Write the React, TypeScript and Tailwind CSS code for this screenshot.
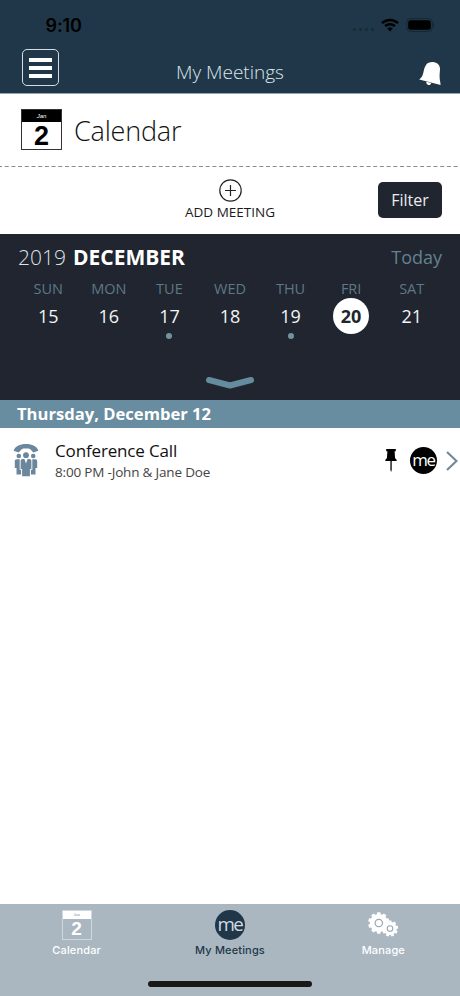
import React from "react";

const sans = "font-['Open_Sans','Noto_Sans',sans-serif]";

function gearPath(cx: number, cy: number, outer: number, inner: number, teeth: number) {
  const pts: string[] = [];
  const step = (Math.PI * 2) / teeth;
  for (let i = 0; i < teeth; i++) {
    const a = i * step - Math.PI / 2;
    const corners: [number, number][] = [
      [-0.34, inner],
      [-0.24, outer],
      [0.24, outer],
      [0.34, inner],
    ];
    corners.forEach(([k, r]) => {
      const t = a + k * step;
      pts.push(`${(cx + r * Math.cos(t)).toFixed(2)} ${(cy + r * Math.sin(t)).toFixed(2)}`);
    });
  }
  return `M${pts.join("L")}Z`;
}

function StatusBar() {
  return (
    <div className="flex h-[50px] items-center justify-between pl-[45.5px] pr-[24px]">
      <span className="mt-[2px] font-['Inter',sans-serif] text-[18px] font-semibold leading-[20px] tracking-[-0.1px] text-black">9:10</span>
      <div className="flex items-center">
        <div className="mt-[9px] flex gap-[3px]">
          {[0, 1, 2, 3].map((i) => (
            <i key={i} className="h-[3px] w-[3px] rounded-full bg-[#172a36]" />
          ))}
        </div>
        <svg className="ml-[7px]" width="18" height="14" viewBox="0 0 18 14" fill="none" stroke="#000" strokeWidth="2.5">
          <path d="M1 5.2a11.5 11.5 0 0 1 16 0" />
          <path d="M4.1 8.2a7.2 7.2 0 0 1 9.8 0" />
          <path d="M9 13.4L6.2 10.5a4 4 0 0 1 5.6 0Z" fill="#000" stroke="none" />
        </svg>
        <svg className="ml-[7px]" width="30" height="14" viewBox="0 0 30 14">
          <rect x=".6" y=".6" width="25.8" height="12.8" rx="4" fill="none" stroke="#152834" />
          <rect x="2.2" y="2.2" width="22.6" height="9.6" rx="2.5" />
          <path d="M27.5 4.8c1.6.7 1.6 3.7 0 4.4z" fill="#152834" />
        </svg>
      </div>
    </div>
  );
}

function Header() {
  return (
    <header className="h-[94px] shrink-0 border-b border-[#8fa5b0] bg-[#1f3748]">
      <StatusBar />
      <div className="grid h-[43px] grid-cols-[1fr_auto_1fr] items-start">
        <button className="ml-[22px] mt-[-1px] flex h-[37px] w-[37px] flex-col items-center justify-center gap-[4px] rounded-[5px] border border-[#d5dde3]">
          <i className="h-[4px] w-[23px] bg-white" />
          <i className="h-[4px] w-[23px] bg-white" />
          <i className="h-[4px] w-[23px] bg-white" />
        </button>
        <h1 className="mt-[10px] text-[19px] font-light leading-[24px] text-[#dde5ea]">My Meetings</h1>
        <svg className="ml-auto mr-[18px] mt-[11px]" width="23" height="25" viewBox="0 0 23 25" fill="#fff">
          <path d="M13.9 1.1C18.2 1.2 21.200 4.5 21 8.3c-.3 4.5-.9 7.7.3 13.1l.3 2.5L.2 18.4c1.9-1.4 3.3-3.3 4-6.2.9-3.6 1-5.6 2.8-8.3C8.4 1.900 11 1 13.900 1.100Z" />
          <path d="M7.300 20.700l5 1.300c-.5 1.600-1.600 2.300-3 1.900s-2.200-1.600-2-3.200Z" />
        </svg>
      </div>
    </header>
  );
}

function MeBadge({ size, fill, ink }: { size: number; fill: string; ink: string }) {
  return (
    <svg className="overflow-visible" width={size} height={size} viewBox="0 0 28 28">
      <circle cx="14" cy="14" r="14" fill={fill} />
      <text x="2.400" y="19.300" fill={ink} className={`${sans} text-[17.500px] tracking-[-1.500px]`}>me</text>
    </svg>
  );
}

function DateIcon() {
  return (
    <div className="mb-[2px] flex h-[41px] w-[41px] flex-col border border-[#333] bg-white font-['Liberation_Sans',sans-serif]">
      <div className="h-[12px] shrink-0 bg-black text-center text-[6px] italic leading-[12px] text-white">Jan</div>
      <div className="text-center text-[27px] font-bold leading-[28px] text-black">2</div>
    </div>
  );
}

const days = [
  { name: "SUN", n: 15 },
  { name: "MON", n: 16 },
  { name: "TUE", n: 17, dot: true },
  { name: "WED", n: 18 },
  { name: "THU", n: 19, dot: true },
  { name: "FRI", n: 20, selected: true },
  { name: "SAT", n: 21 },
];

function Week() {
  return (
    <section className="flex h-[166px] shrink-0 flex-col bg-[#20252f]">
      <div className="flex items-center justify-between px-[18px] pt-[8px] leading-[30px]">
        <div className="flex gap-[7px] text-[21px] text-white">
          <span className="font-light text-[#dfe3e8]">2019</span>
          <span className="font-bold">DECEMBER</span>
        </div>
        <span className="text-[18px] text-[#638290]">Today</span>
      </div>
      <div className="mt-[7px] grid grid-cols-7 px-[18px]">
        {days.map((d) => (
          <div key={d.name} className="flex flex-col items-center">
            <span className="text-[14.500px] leading-[20px] text-[#5f7887]">{d.name}</span>
            <span
              className={
                d.selected
                  ? "mt-[-1px] flex h-[36px] w-[36px] items-center justify-center rounded-full bg-white text-[18px] font-bold text-[#20252f]"
                  : "mt-[-1px] flex h-[36px] w-[36px] items-center justify-center text-[18px] text-[#f2f4f6]"
              }
            >
              {d.n}
            </span>
            {d.dot && <i className="mt-[-1px] h-[6px] w-[6px] rounded-full bg-[#70959f]" />}
          </div>
        ))}
      </div>
      <svg className="mx-auto mb-[9px] mt-auto" width="50" height="16" viewBox="0 0 50 16" fill="none" stroke="#658b9f" strokeWidth="6" strokeLinecap="round" strokeLinejoin="round">
        <path d="M4 5l21 5.500L46 5" />
      </svg>
    </section>
  );
}

function ConferenceIcon() {
  return (
    <svg className="mb-[2px]" width="26" height="34" viewBox="0 0 26 34" fill="#6b879d">
      <path d="M.6 7.800C2 3.200 6.800 1 13 1s11 2.200 12.400 6.800L20.400 9.600 17.300 6.300 15.800 5.600H10.200L8.700 6.300 5.600 9.600Z" />
      <circle cx="13" cy="12.200" r="2.900" />
      <circle cx="5.800" cy="13" r="2.300" />
      <circle cx="20.200" cy="13" r="2.300" />
      <path d="M9.700 15.900h1.700l1.600 4.600 1.600-4.600h1.700c1.400 0 2.100.8 2.100 2v8h-1.500v7.300H9.100v-7.300H7.600v-8c0-1.200.7-2 2.100-2Z" />
      <path d="M6.700 16.200v10.500h1.400v4.700H3.500v-6.500H1.800v-6.600c0-1.400.7-2.100 2-2.100ZM19.300 16.200v10.500h-1.400v4.700h4.600v-6.500h1.700v-6.600c0-1.400-.7-2.100-2-2.100Z" />
    </svg>
  );
}

function MeetingRow() {
  return (
    <div className="flex h-[65px] items-center pl-[13px] pr-[2px]">
      <ConferenceIcon />
      <div className="ml-[16px] mt-[1px] flex-1">
        <div className="text-[17px] leading-[22px] tracking-[-0.15px] text-[#111]">Conference Call</div>
        <div className="text-[13.500px] leading-[20px] tracking-[-0.180px] text-[#444]">8:00 PM -John &amp; Jane Doe</div>
      </div>
      <svg className="mr-[13px]" width="12" height="25" viewBox="0 0 12 25">
        <path d="M1.200 1h9.600v2.200H9.600l.5 7c1 .5 1.500 1.500 1.700 2.800H.2c.2-1.300.7-2.300 1.700-2.800l.5-7H1.200ZM5.400 13h1.300v9l-.6 2-.7-2Z" />
      </svg>
      <MeBadge size={27} fill="#000" ink="#fff" />
      <svg className="ml-[9px]" width="12" height="20" viewBox="0 0 12 20" fill="none" stroke="#71899d" strokeWidth="2.200">
        <path d="M1 1l9.500 9L1 19" />
      </svg>
    </div>
  );
}

function TabBar() {
  const label = "mt-[2px] font-['Inter',sans-serif] text-[11px] font-medium leading-[16px] tracking-[0.150px]";
  return (
    <nav className="flex h-[92px] shrink-0 flex-col bg-[#aab7c1]">
      <div className="grid grid-cols-3 pt-[6px]">
        <div className="flex flex-col items-center text-white">
          <div className="h-[30px] w-[30px] border border-[#cfd8df] font-['Liberation_Sans',sans-serif]">
            <div className="h-[8px] bg-white text-center text-[4px] leading-[8px] text-[#8795a0]">Jan</div>
            <div className="text-center text-[19px] font-bold leading-[20px]">2</div>
          </div>
          <span className={label}>Calendar</span>
        </div>
        <div className="flex flex-col items-center text-[#1f3748]">
          <MeBadge size={30} fill="#1f3748" ink="#d3dce3" />
          <span className={label}>My Meetings</span>
        </div>
        <div className="flex flex-col items-center text-white">
          <svg width="30" height="30" viewBox="0 0 30 30" fill="#fff">
            <path d={gearPath(10.8, 13, 10.8, 9, 10)} />
            <circle cx="10.8" cy="13" r="3.700" stroke="#98a8b3" strokeWidth="1.200" />
            <path d={gearPath(22, 18.500, 8.200, 6.600, 9)} />
            <circle cx="22" cy="18.500" r="2.800" stroke="#98a8b3" strokeWidth="1.100" />
          </svg>
          <span className={label}>Manage</span>
        </div>
      </div>
      <div className="mx-auto mb-[9px] mt-auto h-[6px] w-[164px] rounded-full bg-[#1b1818]" />
    </nav>
  );
}

export default function App() {
  return (
    <div className={`flex h-[996px] w-[460px] flex-col overflow-hidden bg-white ${sans}`}>
      <Header />
      <section className="flex h-[72px] shrink-0 items-center gap-[12px] pl-[21px]">
        <DateIcon />
        <h2 className="mt-[1px] text-[27px] font-light leading-[36px] tracking-[-0.200px] text-[#111]">Calendar</h2>
      </section>
      <svg className="shrink-0" width="460" height="1">
        <path d="M-2 .5H460" stroke="#81918f" strokeWidth="1" strokeDasharray="4 2.700" />
      </svg>
      <section className="grid h-[67px] shrink-0 grid-cols-[1fr_auto_1fr] items-start">
        <div className="col-start-2 flex flex-col items-center pt-[12px]">
          <svg width="23" height="23" viewBox="0 0 23 23" fill="none" stroke="#222" strokeWidth="1.200">
            <circle cx="11.500" cy="11.500" r="10.700" />
            <path d="M11.500 6v11M6 11.500h11" />
          </svg>
          <span className="text-[13.500px] leading-[20px] text-[#1b1b1b]">ADD MEETING</span>
        </div>
        <button className="ml-auto mr-[18px] mt-[15px] h-[36px] w-[64px] rounded-[5px] bg-[#20252f] text-[16px] leading-[36px] text-[#e9edf0]">Filter</button>
      </section>
      <Week />
      <div className="h-[28px] shrink-0 bg-[#688ca0] pl-[17px] text-[16.600px] font-bold leading-[28px] text-white">Thursday, December 12</div>
      <main className="flex-1">
        <MeetingRow />
      </main>
      <TabBar />
    </div>
  );
}
